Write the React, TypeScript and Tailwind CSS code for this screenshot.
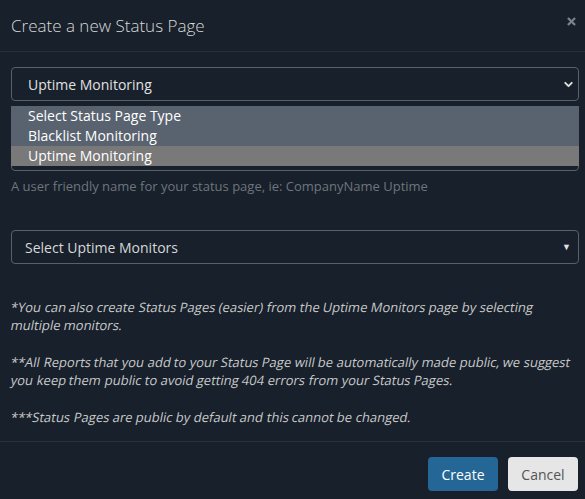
import { ChevronDown, X } from 'lucide-react'

const OPTIONS = ['Select Status Page Type', 'Blacklist Monitoring', 'Uptime Monitoring']

const NOTES = [
  '*You can also create Status Pages (easier) from the Uptime Monitors page by selecting multiple monitors.',
  '**All Reports that you add to your Status Page will be automatically made public, we suggest you keep them public to avoid getting 404 errors from your Status Pages.',
  '***Status Pages are public by default and this cannot be changed.',
]

// the page renders an oblique of the regular face, which is wider than the real italic
function Oblique({ text }: { text: string }) {
  const words = text.split(' ')
  return (
    <>
      {words.map((w, i) => (
        <span key={i}>
          <span className="inline-block -skew-x-[11deg]">{w}</span>
          {i < words.length - 1 ? ' ' : ''}
        </span>
      ))}
    </>
  )
}

export default function App() {
  const selected = 'Uptime Monitoring'

  return (
    <div className="h-[499px] w-[585px] overflow-hidden bg-[#17202b] font-['Open_Sans',sans-serif] text-[#d4d4d4]">
      {/* Header */}
      <div className="flex h-[52px] items-center justify-between border-b border-[#27313e] pl-[11px] pr-[8px]">
        <h4 className="text-[17px] font-light leading-none text-[#d8d8d8]">Create a new Status Page</h4>
        <X className="-mt-[8px] h-[11px] w-[11px] text-[#7a828a]" strokeWidth={5} strokeLinecap="square" />
      </div>

      {/* Body */}
      <div className="pl-[11px] pr-[6px] pt-[15px] pb-[15px]">
        <div className="relative">
          <div className="flex h-[34px] items-center justify-between rounded-[4px] border border-[#59606a] pl-[16px] pr-[3px] text-[14px] text-[#e0e0e0]">
            <span>{selected}</span>
            <ChevronDown className="h-[13px] w-[13px] text-[#e0e0e0]" strokeWidth={3.5} />
          </div>

          {/* name input, mostly hidden behind the open dropdown */}
          <div className="mt-[36px] h-[34px] rounded-[4px] border border-[#59606a]" />

          <div className="absolute left-0 right-0 top-[39px] bg-[#59636f] text-[14px] leading-[20px] text-white">
            {OPTIONS.map((o) => (
              <div key={o} className={`pl-[17px] ${o === selected ? 'bg-[#797979]' : ''}`}>
                {o}
              </div>
            ))}
          </div>

          <p className="mt-[6px] text-[13px] leading-[18px] text-[#6f757c]">
            A user friendly name for your status page, ie: CompanyName Uptime
          </p>
        </div>

        <div className="mt-[35px] flex h-[34px] items-center justify-between rounded-[4px] border border-[#59606a] pl-[13px] pr-[7px] text-[14px] text-[#d8d8d8]">
          <span>Select Uptime Monitors</span>
          <span className="text-[9px] text-[#e0e0e0]">▼</span>
        </div>

        <div className="mt-[34px] text-[13px] leading-[18px] text-[#c9c9c9]">
          {NOTES.map((n, i) => (
            <p key={i} className={i < NOTES.length - 1 ? 'mb-[19px]' : ''}>
              <Oblique text={n} />
            </p>
          ))}
        </div>
      </div>

      {/* Footer */}
      <div className="flex justify-end gap-[10px] border-t border-[#27313e] pr-[7px] pt-[15px]">
        <button className="h-[34px] w-[70px] rounded-[4px] bg-[#246796] text-[14px] text-white">Create</button>
        <button className="h-[34px] w-[70px] rounded-[4px] bg-[#e6e6e6] text-[14px] text-[#555]">Cancel</button>
      </div>
    </div>
  )
}
